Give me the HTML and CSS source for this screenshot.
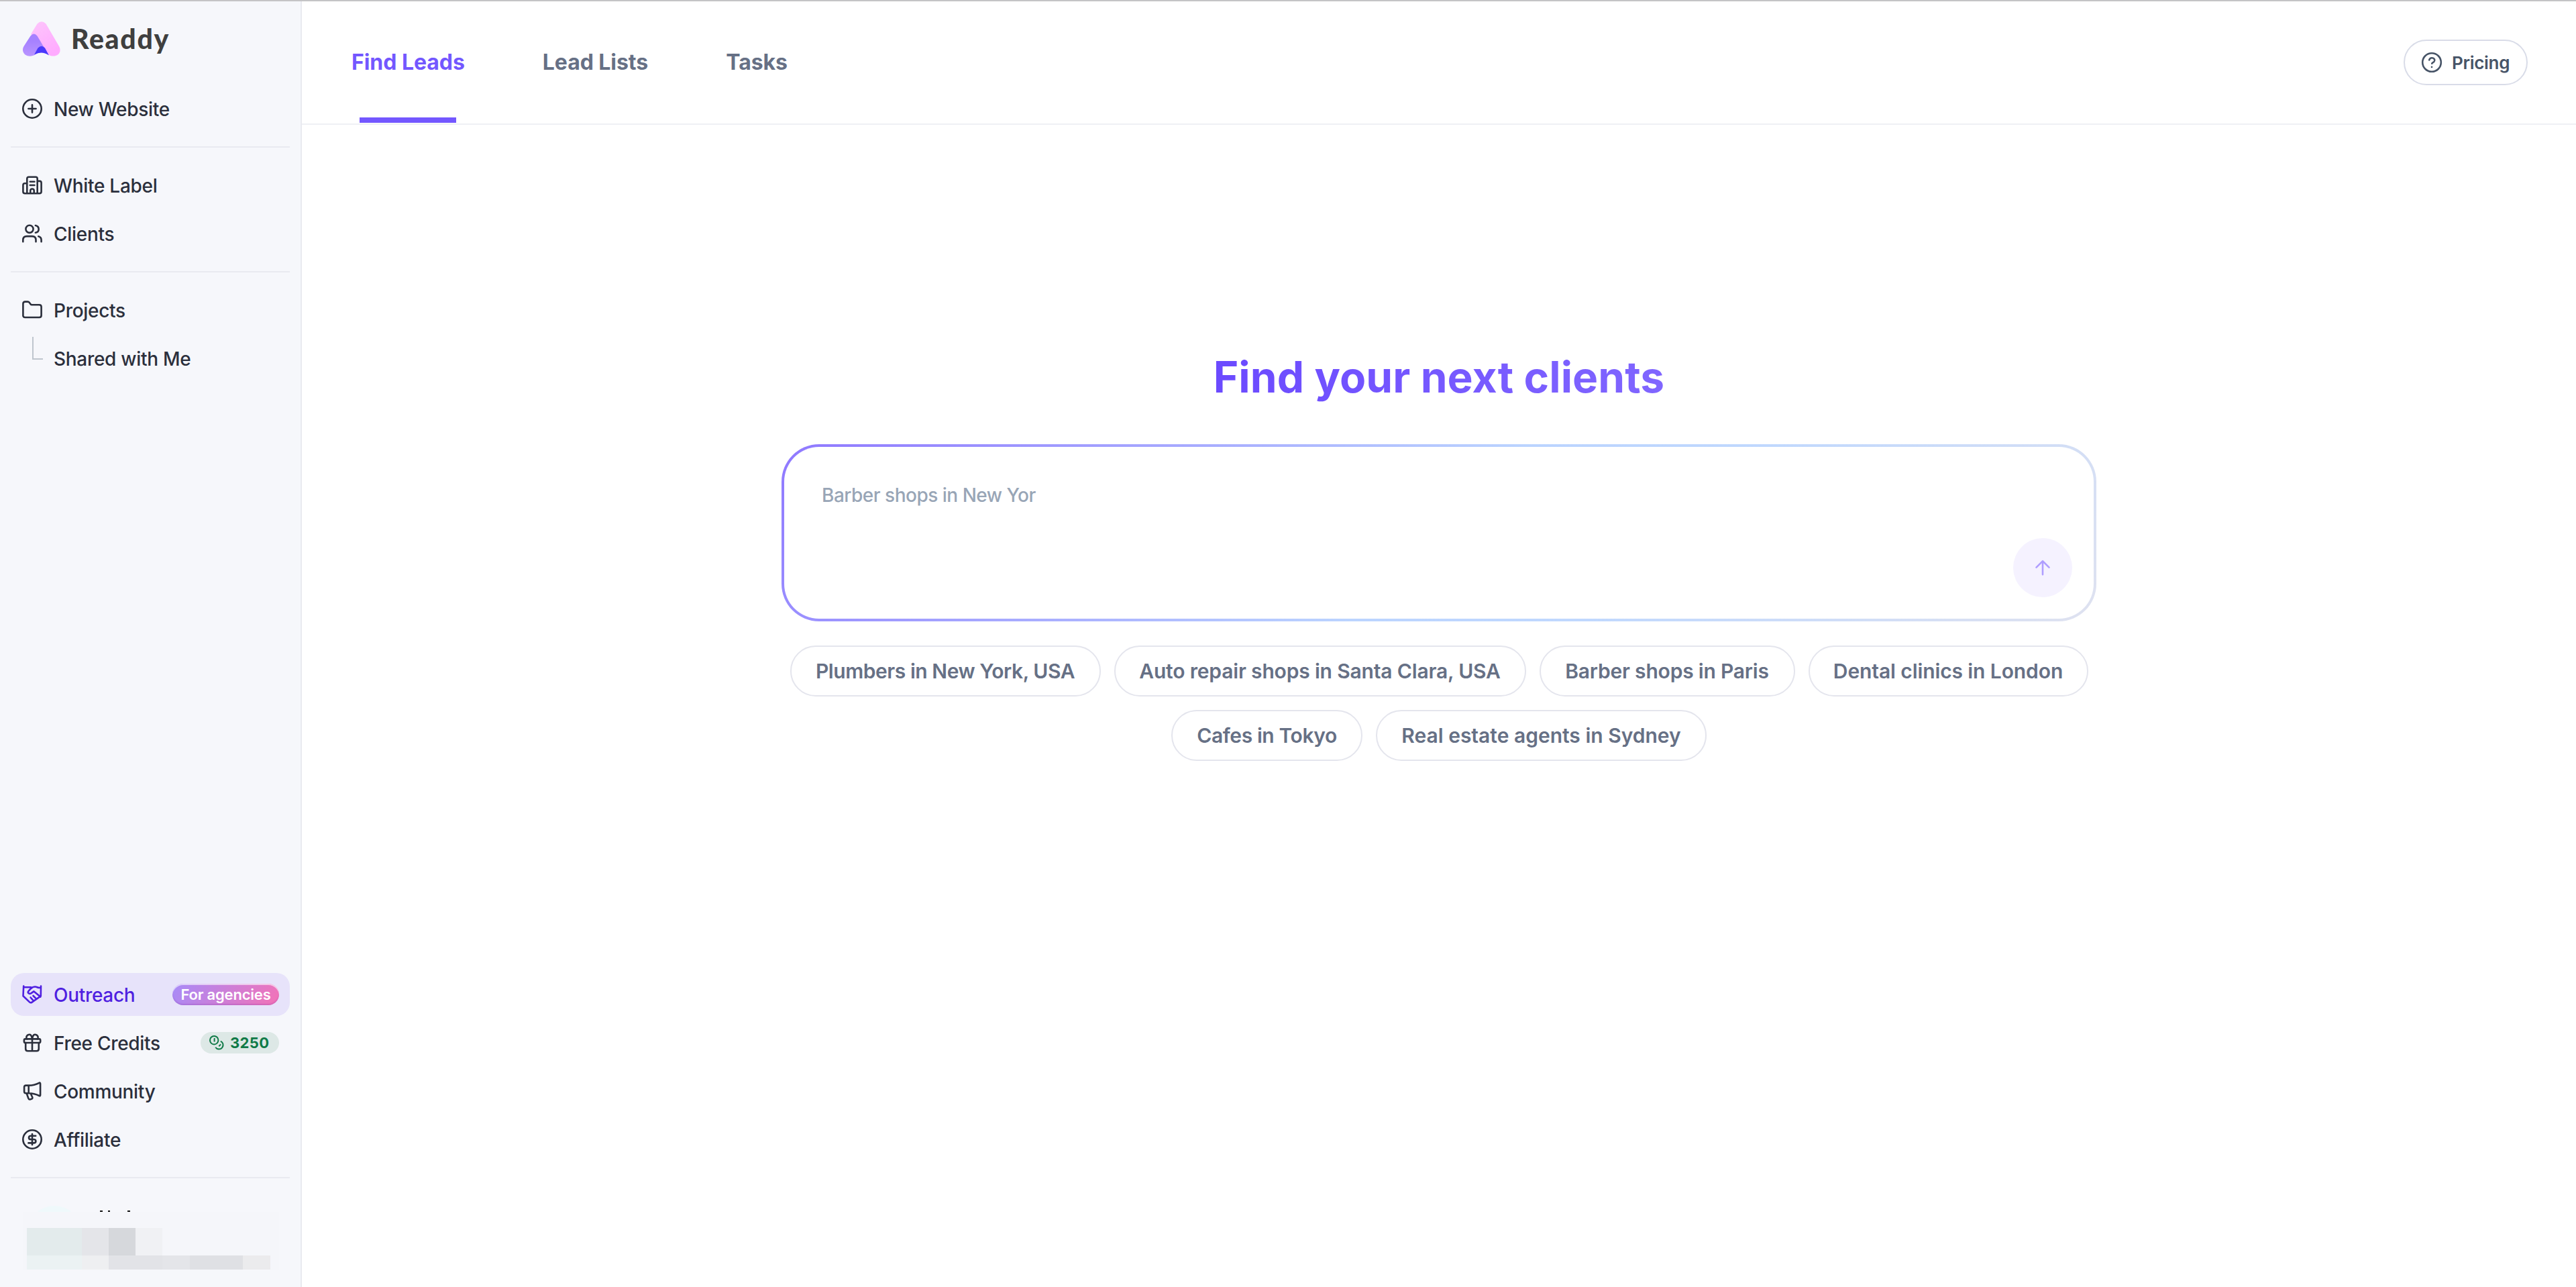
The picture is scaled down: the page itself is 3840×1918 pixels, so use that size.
FILE: index.html
```html
<!DOCTYPE html>
<html lang="en">
<head>
  <meta charset="utf-8">
  <title>Readdy</title>
  <link rel="stylesheet" href="styles.css">
</head>
<body>
  <aside class="sidebar">
    <div class="logo">
      <svg class="logo-mark" width="56" height="52" viewBox="0 0 56 52">
        <defs>
          <linearGradient id="pink" x1="0" y1="0" x2="0.6" y2="1">
            <stop offset="0" stop-color="#fdc6fb"/>
            <stop offset="1" stop-color="#ffabff"/>
          </linearGradient>
          <linearGradient id="violet" x1="0" y1="0" x2="0" y2="1">
            <stop offset="0.3" stop-color="#a681ff"/>
            <stop offset="1" stop-color="#b994ff"/>
          </linearGradient>
        </defs>
        <path fill="url(#pink)" d="M21.500 3.500Q28 -3 34.500 3.500L53.500 36C59 45 53 52 44 51.500Q39.500 51.500 37 47L12 19z"/>
        <path fill="url(#violet)" d="M11.500 21.500Q16.500 15.500 21.500 21.500L38.500 50Q28 43 19 49C15 52 10 52 7 51.200C0 49 -1.500 42 1.500 37z"/>
        <path fill="#4a38fb" d="M22.500 39.500Q28 34 33 39.500L39 50.500Q28 43 17 49.500z"/>
      </svg>
      <span class="logo-text">Readdy</span>
    </div>

    <nav class="nav">
      <a class="nav-item">
        <svg class="icon" viewBox="0 0 32 32"><circle cx="16" cy="16" r="13.700"/><path d="M16 10.400v11.200M10.400 16h11.200"/></svg>
        <span class="label">New Website</span>
      </a>
      <hr>
      <a class="nav-item">
        <svg class="icon" viewBox="0 0 32 32"><path d="M8.300 28.200V6.200q0-2.500 2.500-2.500h10.400q2.500 0 2.500 2.500v22M8.300 13.300H5q-2.600 0-2.600 2.600v9.700q0 2.600 2.600 2.600h22q2.600 0 2.600-2.600V12.500q0-2.600-2.600-2.600h-3.300M12.800 10.700h6.600M12.800 16h6.600M13.300 28v-3.800q0-2.700 2.700-2.700t2.700 2.700V28"/></svg>
        <span class="label">White Label</span>
      </a>
      <a class="nav-item">
        <svg class="icon" viewBox="0 0 32 32"><circle cx="12" cy="9.300" r="5.600"/><path d="M2.300 28.300v-2.600q0-5.600 5.600-5.600h8q5.600 0 5.600 5.600v2.600M20.900 4q4.800 1 4.800 5.500t-4.800 5.300M25.300 20.200q4.300 1 4.300 5.500v2.600"/></svg>
        <span class="label">Clients</span>
      </a>
      <hr>
      <a class="nav-item">
        <svg class="icon" viewBox="0 0 32 32"><path d="M2.400 25V6.600q0-3 3-3h3.800q1.800 0 2.800 1.500l1.500 2.200q.7 1 2 1h11q3.100 0 3.100 3V24q0 3-3 3H5.400q-3 0-3-2.900z"/></svg>
        <span class="label">Projects</span>
      </a>
      <a class="nav-item">
        <span class="branch"></span>
        <span class="label">Shared with Me</span>
      </a>
    </nav>

    <nav class="nav nav-bottom">
      <a class="nav-item active">
        <svg class="icon" viewBox="0 0 32 32"><path d="M3.200 3.600L2.500 18.200l9.500 9.200q1.800 1.600 3.600.2l13.200-9.200L29 3.600M3.200 5.200h11M29 5.700q-2.800.8-5.600-.5c-3.400-1.500-6.600-.6-9.400 2l-3.600 4c-1.800 2.400 1.200 4.600 3.800 3.200l4.300-3 9.800 8.200M17.500 18l4.200 4.200M13.600 20.500l4.200 4.800"/></svg>
        <span class="label">Outreach</span>
        <span class="badge">For agencies</span>
      </a>
      <a class="nav-item">
        <svg class="icon" viewBox="0 0 32 32"><rect x="3.900" y="10.400" width="24.300" height="5.600" rx="1.800"/><path d="M6.200 16v9q0 3.200 3.200 3.200h13.200q3.200 0 3.200-3.200v-9M16 10.400v17.800M16 10.200C15 3.800 12.800 3.400 10.800 3.900C6.700 5 6.700 9.200 8.300 10.300M16 10.200C17 3.800 19.200 3.400 21.200 3.900C25.300 5 25.300 9.200 23.700 10.300"/></svg>
        <span class="label">Free Credits</span>
        <span class="credits">
          <svg class="coins" viewBox="0 0 24 24"><circle cx="8.200" cy="8.200" r="6.200"/><path d="M7.800 6h.8v4.600M17.800 9.600A6.200 6.200 0 1 1 10.200 18.700M15.300 17.200l2.800-2.800"/></svg>
          3250
        </span>
      </a>
      <a class="nav-item">
        <svg class="icon" viewBox="0 0 32 32"><path d="M10.700 7.600v11.600M10.700 7.600H6.500q-2.400 0-2.400 2.400v6.800q0 2.400 2.400 2.400h4.200q8.300 0 15.800 3.800q1.600.8 1.600-1V5q0-2-1.700-1.200q-7.400 3.800-15.700 3.800zM7.600 19.300l2.800 7.700q.8 2 2.700 1.400l1.900-.7q2-.8 1.200-2.700L13.800 20"/></svg>
        <span class="label">Community</span>
      </a>
      <a class="nav-item">
        <svg class="icon" viewBox="0 0 32 32"><circle cx="16" cy="16" r="13.700"/><path d="M16 8v16M21.200 10.800h-7q-3.200 0-3.200 2.600t3.200 2.600h3.800q3.400 0 3.400 2.700t-3.400 2.700h-7.600"/></svg>
        <span class="label">Affiliate</span>
      </a>
      <hr>
    </nav>

    <!-- masked account row -->
    <div class="account">
      <div class="account-peek">
        <i class="avatar"></i>
        <i class="tick tick-1"></i>
        <i class="tick tick-2"></i>
        <i class="tick tick-3"></i>
      </div>
      <div class="mask">
        <i class="m1"></i><i class="m2"></i><i class="m3"></i><i class="m4"></i><i></i><i></i><i></i><i></i>
        <i class="m5"></i><i class="m6"></i><i class="m7"></i><i class="m7"></i><i class="m2"></i><i class="m8"></i><i class="m8"></i><i class="m9"></i>
      </div>
    </div>
  </aside>

  <main class="main">
    <header class="header">
      <div class="tabs">
        <a class="tab selected">Find Leads</a>
        <a class="tab">Lead Lists</a>
        <a class="tab">Tasks</a>
      </div>
      <button class="pricing">
        <svg class="icon" viewBox="0 0 32 32"><circle cx="16" cy="16" r="13.800"/><path d="M12.200 12.400q1-3.300 4.200-3.200c3.600.2 5 3.600 3 5.800c-1.500 1.300-3 1.500-3.200 2.800M16 22.700v.2"/></svg>
        <span>Pricing</span>
      </button>
    </header>

    <section class="search">
      <h1>Find your next clients</h1>
      <div class="prompt">
        <div class="placeholder">Barber shops in New Yor</div>
        <button class="send">
          <svg viewBox="0 0 32 32"><path d="M16 26.300V6.200M6.500 15.600L16 6.200l9.500 9.400"/></svg>
        </button>
      </div>
      <div class="chips">
        <button class="chip chip-plumbers">Plumbers in New York, USA</button>
        <button class="chip chip-auto">Auto repair shops in Santa Clara, USA</button>
        <button class="chip chip-barber">Barber shops in Paris</button>
        <button class="chip chip-dental">Dental clinics in London</button>
        <button class="chip chip-cafes">Cafes in Tokyo</button>
        <button class="chip chip-estate">Real estate agents in Sydney</button>
      </div>
    </section>
  </main>
</body>
</html>
```
FILE: styles.css
```css
* {
  box-sizing: border-box;
}

body {
  margin: 0;
  height: 1918px;
  display: flex;
  border-top: 2px solid #c4c4c6;
  background: #fff;
  font-family: Inter, "Liberation Sans", sans-serif;
  overflow: hidden;
}

button {
  font-family: inherit;
  background: #fff;
  padding: 0;
  white-space: nowrap;
}

/* sidebar */
.sidebar {
  width: 450px;
  flex: none;
  display: flex;
  flex-direction: column;
  background: #f6f7fb;
  border-right: 2px solid #e9eaf0;
}

.logo {
  display: flex;
  gap: 16px;
  height: 128px;
  padding: 30px 0 0 34px;
}

.logo-mark {
  flex: none;
}

.logo-text {
  font-family: Lato, sans-serif;
  font-weight: 900;
  font-size: 41px;
  line-height: 52px;
  letter-spacing: 1.7px;
  color: #3f3f3f;
}

.nav {
  display: flex;
  flex-direction: column;
  gap: 8px;
  padding: 0 16px;
}

.nav hr {
  width: 100%;
  height: 2px;
  margin: 16px 0;
  border: 0;
  background: #e9eaf0;
}

.nav-bottom {
  margin-top: auto;
}

.nav-bottom hr {
  margin-bottom: 0;
}

.nav-item {
  display: flex;
  align-items: center;
  height: 64px;
  padding: 0 16px;
  gap: 16px;
  border-radius: 20px;
  font-size: 28px;
  font-weight: 500;
  white-space: nowrap;
  color: #2b2f3c;
}

.label {
  padding-top: 1px;
  letter-spacing: -0.3px;
}

.nav-item.active {
  background: #e7e3fa;
  color: #4f1fe0;
}

.icon {
  width: 32px;
  height: 32px;
  flex: none;
  fill: none;
  stroke: currentColor;
  stroke-width: 2.6;
  stroke-linecap: round;
  stroke-linejoin: round;
}

.branch {
  width: 16px;
  height: 34px;
  margin-left: 16px;
  align-self: flex-start;
  border-left: 2px solid #bfc6ce;
  border-bottom: 2px solid #bfc6ce;
}

.badge {
  margin-left: auto;
  width: 159px;
  height: 32px;
  line-height: 32px;
  border-radius: 16px;
  text-align: center;
  font-size: 22px;
  font-weight: 600;
  letter-spacing: -0.2px;
  color: #fff;
  background: linear-gradient(120deg, #a78bf8, #f472b6);
  box-shadow: inset 0 2px 0 rgba(255, 255, 255, 0.6), inset 0 -2px 2px rgba(120, 40, 160, 0.2);
}

.credits {
  margin-left: auto;
  display: flex;
  align-items: center;
  gap: 8px;
  width: 117px;
  height: 32px;
  padding-left: 12px;
  border-radius: 16px;
  font-size: 22px;
  font-weight: 700;
  letter-spacing: 0.4px;
  color: #0f7a47;
  background: #dde8e6;
}

.coins {
  width: 24px;
  height: 24px;
  flex: none;
  fill: none;
  stroke: currentColor;
  stroke-width: 2;
}

/* account row */
.account {
  height: 162px;
  padding: 41px 32px 26px 34px;
}

.account-peek {
  position: relative;
  height: 9px;
  overflow: hidden;
}

.account-peek i {
  position: absolute;
}

.avatar {
  left: 7px;
  top: 0;
  width: 80px;
  height: 80px;
  border-radius: 50%;
  background: #eff9fb;
}

.tick {
  top: 7px;
  width: 4px;
  height: 2px;
  background: #111;
}

.tick-1 { left: 115px; }
.tick-2 { left: 127px; width: 3px; }
.tick-3 { left: 156px; }

.mask {
  display: grid;
  grid-template-columns: 41px 41px 40px 40px 40px 41px 40px 39px 41px;
  grid-template-rows: 41px 21px;
  padding: 24px 6px 0;
  background: #f5f6fa;
}

.mask .m1, .mask .m5 { grid-column: span 2; }
.m1 { background: #e3ebec; }
.m2 { background: #e4e5e9; }
.m3 { background: #d6d8dc; }
.m4 { background: #f0f1f4; }
.m5 { background: #ebf2f3; }
.m6 { background: #eeeff1; }
.m7 { background: #e2e3e7; }
.m8 { background: #dfe0e4; }
.m9 { background: #ebebed; }

/* main */
.main {
  flex: 1;
}

.header {
  display: flex;
  justify-content: space-between;
  align-items: center;
  height: 184px;
  padding: 0 72px 0 74px;
  border-bottom: 2px solid #eff0f5;
}

.tabs {
  display: flex;
  gap: 116px;
  height: 182px;
}

.tab {
  position: relative;
  line-height: 182px;
  font-size: 32px;
  font-weight: 700;
  letter-spacing: -0.05px;
  white-space: nowrap;
  color: #667085;
}

.tab.selected {
  color: #7357ff;
}

.tab.selected::after {
  content: "";
  position: absolute;
  left: 12px;
  bottom: 1px;
  width: 144px;
  height: 8px;
  background: #7357ff;
}

.pricing {
  display: flex;
  align-items: center;
  gap: 14px;
  width: 185px;
  height: 68px;
  padding-left: 24px;
  border: 2px solid #d9dce8;
  border-radius: 34px;
  font-size: 26px;
  font-weight: 600;
  letter-spacing: -0.3px;
  color: #475467;
}

.search {
  display: flex;
  flex-direction: column;
  align-items: center;
  padding-top: 328px;
}

h1 {
  margin: 0;
  font-size: 64px;
  font-weight: 700;
  line-height: 96px;
  letter-spacing: 0.1px;
  white-space: nowrap;
  color: transparent;
  background: linear-gradient(90deg, #6b4aff, #8066ff);
  -webkit-background-clip: text;
  background-clip: text;
}

.prompt {
  display: flex;
  justify-content: space-between;
  width: 1960px;
  height: 264px;
  margin-top: 52px;
  padding: 54px 32px 32px 56px;
  border: 4px solid transparent;
  border-radius: 56px;
  background:
    linear-gradient(#fff, #fff) padding-box,
    linear-gradient(135deg, #8f78ff, #bbd4ff 50%, #c0d8fe 66%, #dfe2f0) border-box;
}

.placeholder {
  font-size: 28px;
  font-weight: 500;
  line-height: 36px;
  letter-spacing: -0.5px;
  color: #98a5b6;
}

.send {
  display: flex;
  align-items: center;
  justify-content: center;
  width: 88px;
  height: 88px;
  align-self: flex-end;
  border: 0;
  border-radius: 50%;
  background: #f5f2ff;
}

.send svg {
  width: 32px;
  height: 32px;
  fill: none;
  stroke: #af9eff;
  stroke-width: 2.6;
  stroke-linecap: round;
  stroke-linejoin: round;
}

.chips {
  display: flex;
  flex-wrap: wrap;
  justify-content: center;
  gap: 20px;
  width: 1960px;
  margin-top: 36px;
}

.chip {
  height: 76px;
  border: 2px solid #e4e5ed;
  border-radius: 38px;
  font-size: 30px;
  font-weight: 600;
  color: #667085;
}

.chip-plumbers { width: 463px; letter-spacing: -0.45px; }
.chip-auto { width: 614px; letter-spacing: -0.17px; }
.chip-barber { width: 381px; letter-spacing: -0.2px; }
.chip-dental { width: 417px; letter-spacing: -0.1px; }
.chip-cafes { width: 285px; letter-spacing: -0.4px; }
.chip-estate { width: 493px; }
```
